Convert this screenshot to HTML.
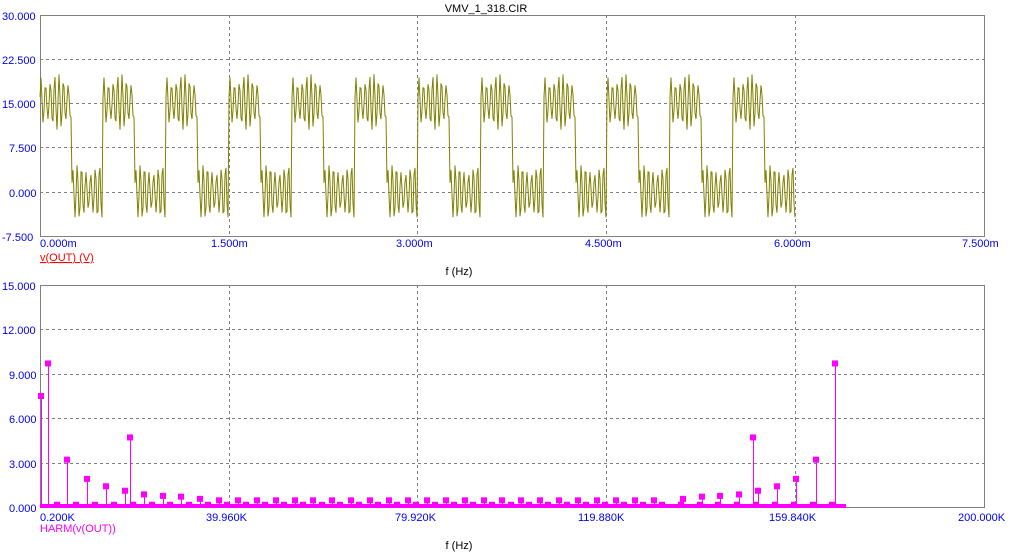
<!DOCTYPE html>
<html><head><style>
html,body{margin:0;padding:0;background:#fff;width:1011px;height:556px;overflow:hidden}
svg{display:block}
text{font-family:"Liberation Sans",Arial,sans-serif;font-size:11px}
.b{fill:#0000ff}
</style></head><body>
<svg id="s" width="1011" height="556" xmlns="http://www.w3.org/2000/svg">
<g id="grid" stroke="#808080" stroke-width="1" stroke-dasharray="3,3" fill="none"></g>
<rect x="40.5" y="15.5" width="944" height="221" fill="none" stroke="#808080"/>
<rect x="40.5" y="285.5" width="944" height="222" fill="none" stroke="#808080"/>
<polyline id="w" fill="none" stroke="#808000" stroke-width="1"/>
<g id="h" fill="#ff00ff" stroke="#ff00ff"></g>
<text x="486" y="12" text-anchor="middle" fill="#000" font-size="11">VMV_1_318.CIR</text>
<text class="b" x="2" y="20">30.000</text>
<text class="b" x="2" y="64">22.500</text>
<text class="b" x="2" y="108">15.000</text>
<text class="b" x="9" y="152">7.500</text>
<text class="b" x="9" y="197">0.000</text>
<text class="b" x="2" y="241">-7.500</text>
<text class="b" x="40" y="247">0.000m</text>
<text class="b" x="211" y="247">1.500m</text>
<text class="b" x="396" y="247">3.000m</text>
<text class="b" x="585" y="247">4.500m</text>
<text class="b" x="774" y="247">6.000m</text>
<text class="b" x="962" y="247">7.500m</text>
<text x="40" y="261" fill="#ff0000" text-decoration="underline">v(OUT) (V)</text>
<text x="459" y="275" text-anchor="middle" fill="#000">f (Hz)</text>
<text class="b" x="2" y="290">15.000</text>
<text class="b" x="2" y="334">12.000</text>
<text class="b" x="9" y="379">9.000</text>
<text class="b" x="9" y="423">6.000</text>
<text class="b" x="9" y="468">3.000</text>
<text class="b" x="9" y="512">0.000</text>
<text class="b" x="40" y="521">0.200K</text>
<text class="b" x="206" y="521">39.960K</text>
<text class="b" x="395" y="521">79.920K</text>
<text class="b" x="578" y="521">119.880K</text>
<text class="b" x="769" y="521">159.840K</text>
<text class="b" x="958" y="521">200.000K</text>
<text x="40" y="532" fill="#ff00ff">HARM(v(OUT))</text>
<text x="459" y="549" text-anchor="middle" fill="#000">f (Hz)</text>
</svg>
<script>
var NS="http://www.w3.org/2000/svg";
var g=document.getElementById('grid');
function ln(x1,y1,x2,y2){var l=document.createElementNS(NS,'line');l.setAttribute('x1',x1);l.setAttribute('y1',y1);l.setAttribute('x2',x2);l.setAttribute('y2',y2);g.appendChild(l);}
var xs=[229.5,417.5,606.5,795.5];
xs.forEach(function(x){ln(x,15,x,236);ln(x,285,x,507);});
[59.5,103.5,147.5,192.5].forEach(function(y){ln(40,y,984,y);});
[329.5,374.5,418.5,463.5].forEach(function(y){ln(40,y,984,y);});
var pts=[];
for(var x=40;x<=795;x+=1){
 var t=(x-40)/126;
 var ph=(t/0.5)%1;
 var hi=ph<0.5;
 var base=hi?15.25:0;
 var r=0.8*Math.sin(2*Math.PI*t*28)+0.2*Math.sin(2*Math.PI*t*34+1);
 var v=base+4.75*r;
 var y=236-(v+7.5)*5.893;
 pts.push(x+','+y.toFixed(1));
}
document.getElementById('w').setAttribute('points',pts.join(' '));
var h=document.getElementById('h');
function stem(x,v,sz){var y=507-v*14.8;
 var l=document.createElementNS(NS,'line');l.setAttribute('x1',x+0.5);l.setAttribute('x2',x+0.5);l.setAttribute('y1',507);l.setAttribute('y2',y);h.appendChild(l);
 var r=document.createElementNS(NS,'rect');r.setAttribute('x',x-3);r.setAttribute('y',y-3);r.setAttribute('width',sz||6);r.setAttribute('height',sz||6);r.setAttribute('stroke','none');h.appendChild(r);}
var bl=document.createElementNS(NS,'rect');bl.setAttribute('x',40);bl.setAttribute('y',504);bl.setAttribute('width',806);bl.setAttribute('height',4);bl.setAttribute('stroke','none');h.appendChild(bl);
stem(41,7.5);
var L=[[48,9.7],[67,3.2],[87,1.9],[106,1.4],[125,1.1],[130,4.7],[144,0.85],[163,0.75],[181,0.7],[200,0.55]];
L.forEach(function(p){stem(p[0],p[1]);stem(883-p[0],p[1]);});
for(var x=219;x<=665;x+=18.9){stem(Math.round(x),0.45);}
for(var x=57;x<=840;x+=18.9){stem(Math.round(x),0.15);}
</script>
</body></html>
